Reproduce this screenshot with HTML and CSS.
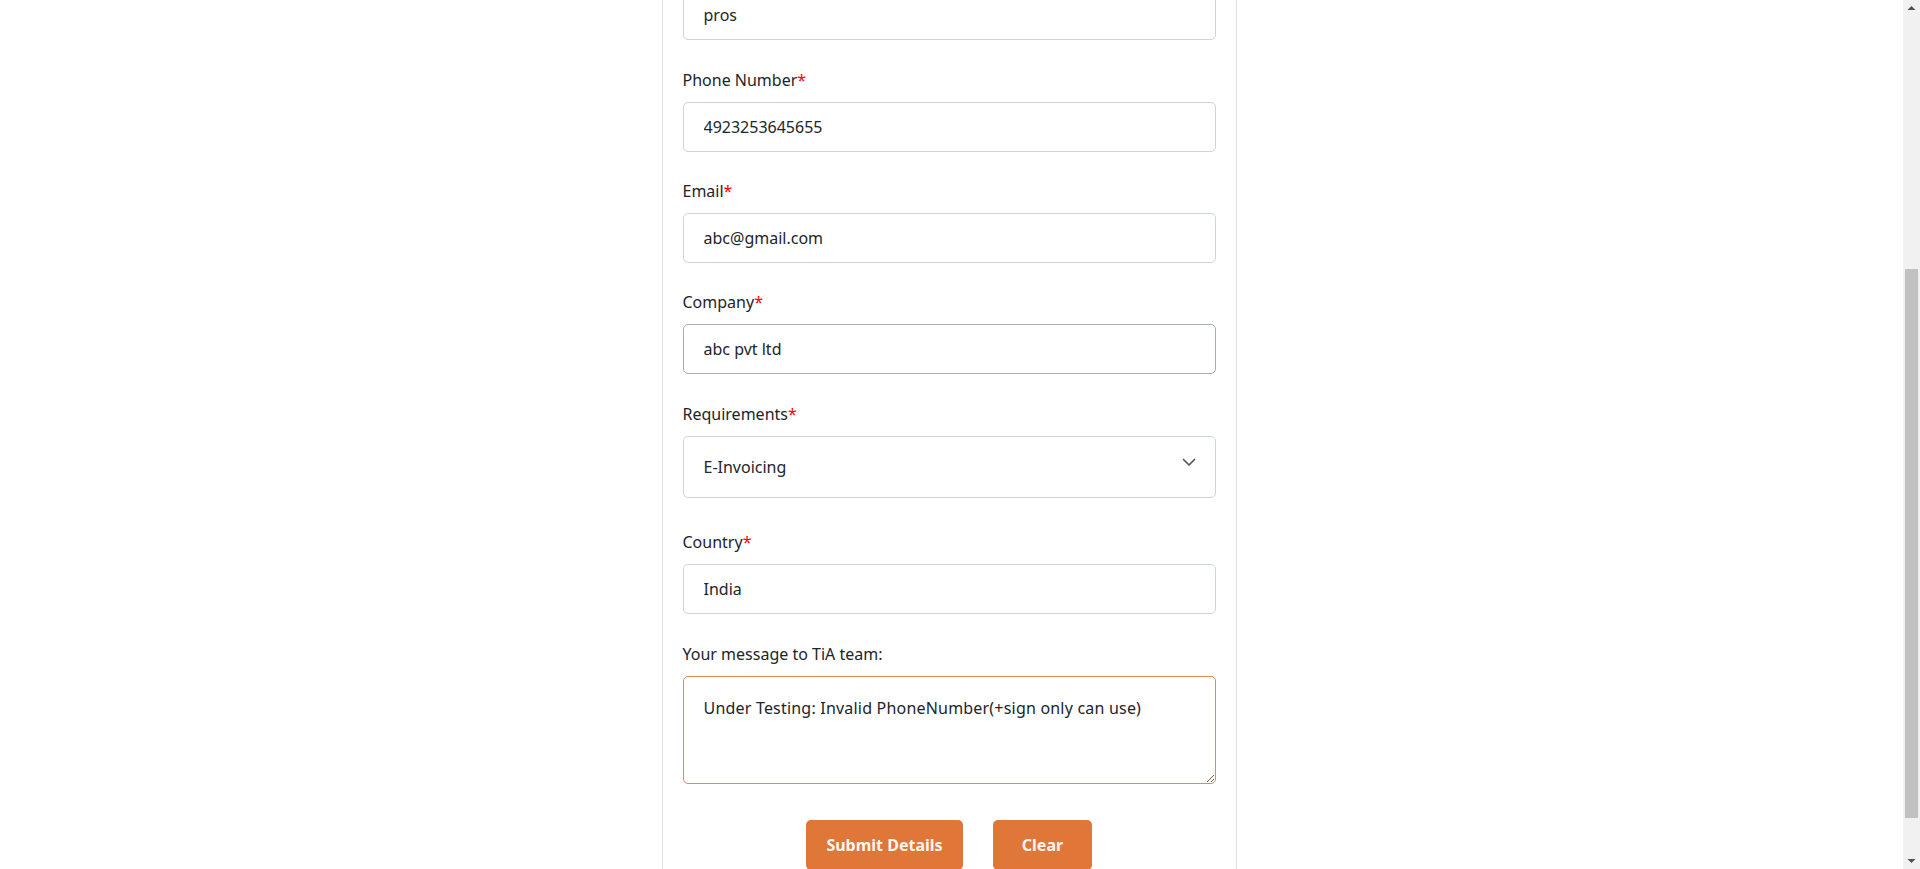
FILE: index.html
```html
<!DOCTYPE html>
<html lang="en">
<head>
<meta charset="utf-8">
<title>Contact TiA</title>
<link rel="stylesheet" href="styles.css">
</head>
<body>
<div class="page">
  <form class="card" autocomplete="off">
    <div class="form-head">
      <h2 class="form-title">Contact TiA</h2>
      <p class="form-sub">Share your details and our team will reach out.</p>
    </div>

    <div class="field">
      <label class="field-label">First Name<span class="req">*</span></label>
      <input class="control" type="text" value="test">
    </div>

    <div class="field">
      <label class="field-label">Last Name<span class="req">*</span></label>
      <input class="control" type="text" value="pros">
    </div>

    <div class="field">
      <label class="field-label">Phone Number<span class="req">*</span></label>
      <input class="control" type="text" value="4923253645655">
    </div>

    <div class="field">
      <label class="field-label">Email<span class="req">*</span></label>
      <input class="control" type="text" value="abc@gmail.com">
    </div>

    <div class="field">
      <label class="field-label">Company<span class="req">*</span></label>
      <input class="control is-hover" type="text" value="abc pvt ltd">
    </div>

    <div class="field field-select">
      <label class="field-label">Requirements<span class="req">*</span></label>
      <div class="select-wrap">
        <select class="control control-select">
          <option>E-Invoicing</option>
          <option>E-Way Bill</option>
          <option>GST Returns</option>
        </select>
        <svg class="chevron" width="14" height="9" viewBox="0 0 14 9" aria-hidden="true">
          <path d="M1.5 1.5 L7 7 L12.5 1.5" fill="none" stroke="#50565c" stroke-width="1.7" stroke-linecap="round" stroke-linejoin="round"/>
        </svg>
      </div>
    </div>

    <div class="field">
      <label class="field-label">Country<span class="req">*</span></label>
      <input class="control" type="text" value="India">
    </div>

    <div class="field field-message">
      <label class="field-label">Your message to TiA team:</label>
      <textarea class="control control-area">Under Testing: Invalid PhoneNumber(+sign only can use)</textarea>
    </div>

    <div class="actions">
      <button type="button" class="btn btn-submit">Submit Details</button>
      <button type="button" class="btn btn-clear">Clear</button>
    </div>
  </form>
</div>

<div class="scrollbar" aria-hidden="true">
  <div class="sb-btn">
    <svg width="17" height="17" viewBox="0 0 17 17"><path d="M4.5 10 L8.5 6 L12.5 10 Z" fill="#505050"/></svg>
  </div>
  <div class="sb-track">
    <div class="sb-thumb"></div>
  </div>
  <div class="sb-btn">
    <svg width="17" height="17" viewBox="0 0 17 17"><path d="M4.5 7 L8.5 11 L12.5 7 Z" fill="#505050"/></svg>
  </div>
</div>
<script src="script.js"></script>
</body>
</html>
```

FILE: styles.css
```css
body {
  margin: 0;
  background: #ffffff;
  color: #212529;
  font-family: "Noto Sans", "Open Sans", sans-serif;
  font-size: 16px;
}

.page {
  display: flex;
  justify-content: center;
  padding: 40px 22px 32px 0;
}

.card {
  width: 575px;
  box-sizing: border-box;
  border: 1px solid #dee2e6;
  border-radius: 6px;
  padding: 20px;
  margin: 0;
}

.form-head {
  margin-bottom: 110.8px;
}

.form-title {
  margin: 0 0 8px;
  font-size: 28px;
  line-height: 40px;
  font-weight: 600;
}

.form-sub {
  margin: 0;
  line-height: 24px;
  color: #6c757d;
  white-space: nowrap;
}

.field {
  margin-bottom: 27.4px;
}

.field-select {
  margin-bottom: 32.5px;
}

.field-message {
  margin-bottom: 36px;
}

.field-label {
  display: block;
  font-size: 16px;
  line-height: 24px;
  margin-bottom: 10px;
  color: #212529;
}

.req {
  color: #ff0000;
}

.control {
  display: block;
  width: 100%;
  box-sizing: border-box;
  height: 50px;
  margin: 0;
  padding: 0 20px;
  border: 1px solid #ced4da;
  border-radius: 5px;
  background: #ffffff;
  color: #212529;
  font-family: inherit;
  font-size: 16px;
  outline: none;
}

.control.is-hover {
  border-color: #a8adb3;
}

.select-wrap {
  position: relative;
}

.control-select {
  height: 62px;
  -webkit-appearance: none;
  appearance: none;
}

.chevron {
  position: absolute;
  right: 20px;
  top: 22px;
}

.control-area {
  height: 108px;
  padding: 19px 20px;
  line-height: 24px;
  letter-spacing: 0.2px;
  border-color: #e4894f;
  resize: vertical;
}

.actions {
  display: flex;
  justify-content: center;
  gap: 30px;
}

.btn {
  height: 50px;
  padding: 0;
  border: none;
  border-radius: 5px;
  background: #e07638;
  color: #fdf6f1;
  font-family: inherit;
  font-size: 16px;
  font-weight: 700;
  cursor: pointer;
}

.btn-submit {
  width: 157px;
}

.btn-clear {
  width: 99px;
}

/* window scrollbar (drawn, since the capture hides native bars) */
.scrollbar {
  position: fixed;
  top: 0;
  right: 0;
  width: 17px;
  height: 100vh;
  background: #f1f1f1;
  display: flex;
  flex-direction: column;
}

.sb-btn {
  height: 17px;
  flex: none;
}

.sb-btn svg {
  display: block;
}

.sb-track {
  flex: 1;
  padding: 252px 2px 0;
}

.sb-thumb {
  height: 549px;
  background: #c1c1c1;
}
```

FILE: script.js
```js
if ('scrollRestoration' in history) { history.scrollRestoration = 'manual'; }
function doScroll() { window.scrollTo(0, 399); }
doScroll();
window.addEventListener('load', doScroll);
```
